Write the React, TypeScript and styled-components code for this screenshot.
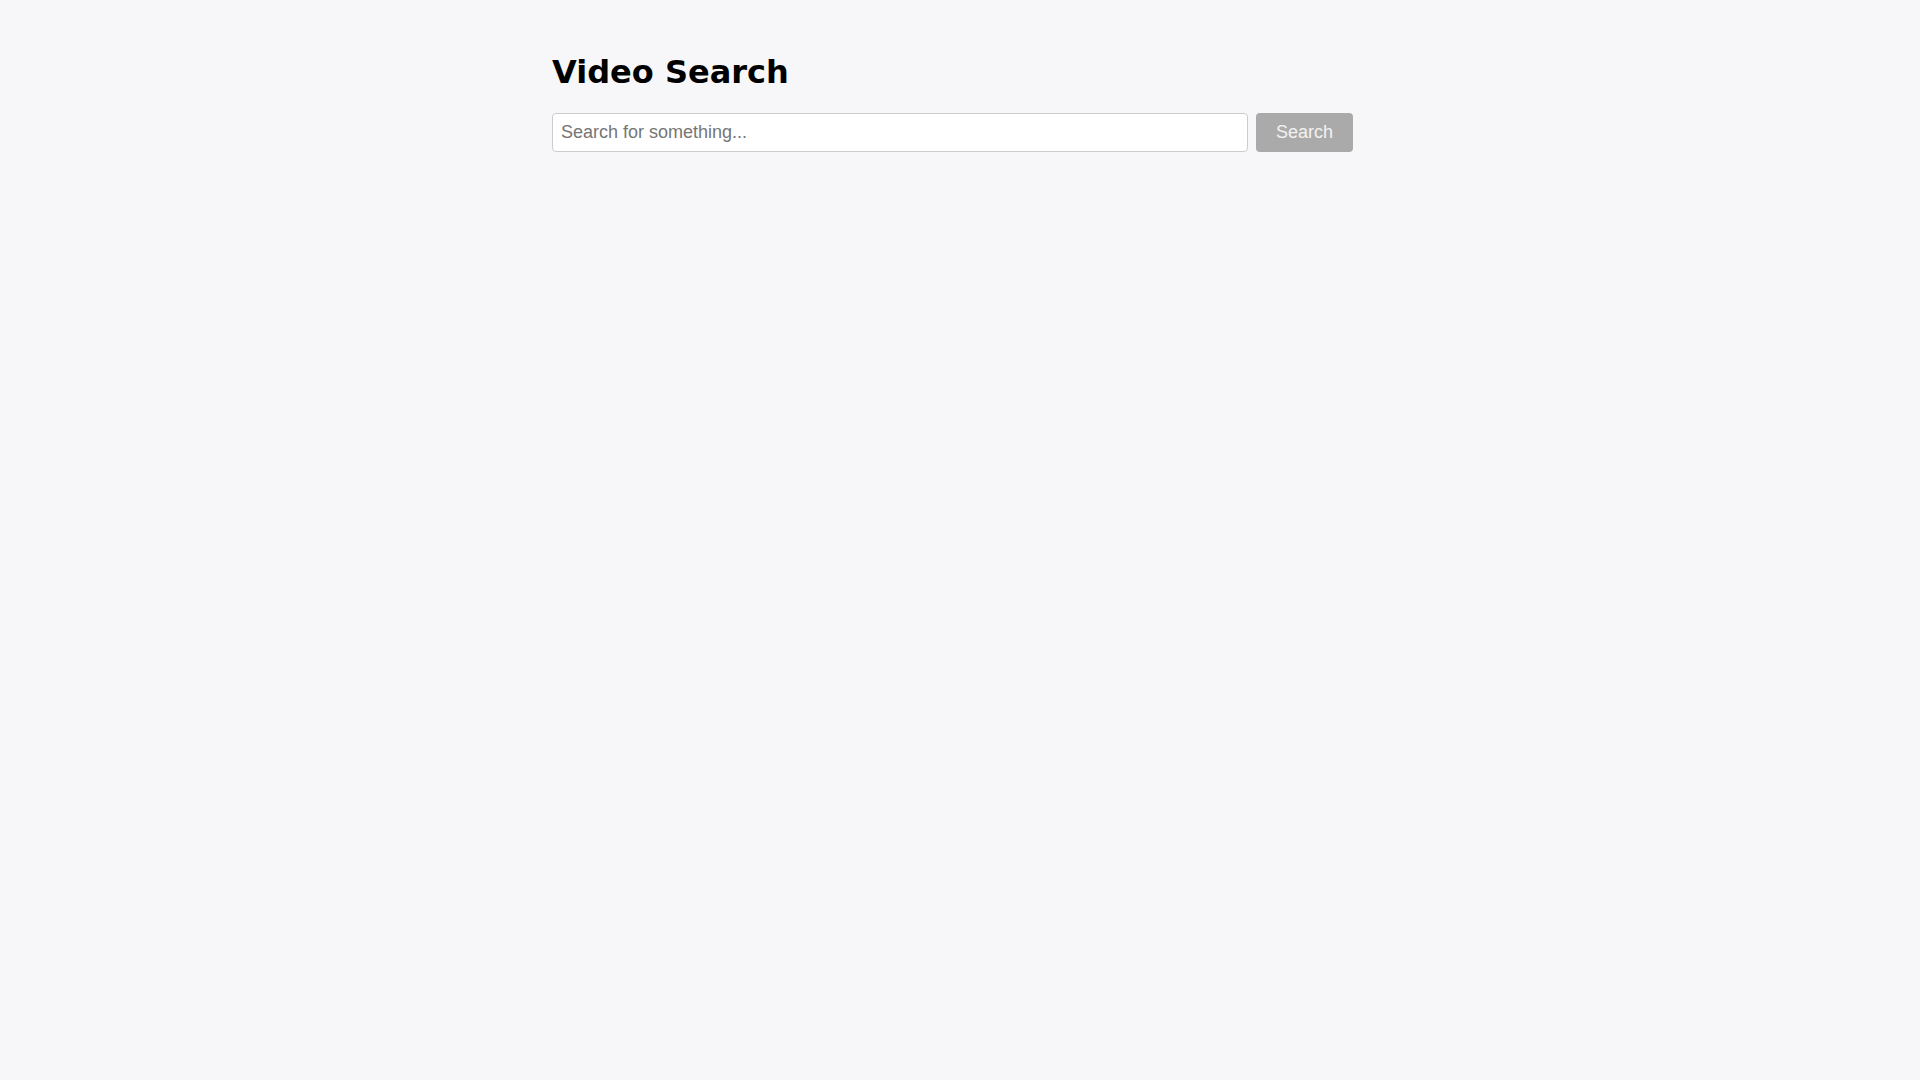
import React, { useState } from "react";
import styled, { createGlobalStyle } from "styled-components";

const GlobalStyle = createGlobalStyle`
  html, body {
    margin: 0;
    padding: 0;
    background: #f7f7f9;
  }
`;

const Page = styled.div`
  min-height: 100vh;
  padding: 32px 31px 32px 16px;
  background: #f7f7f9;
  font-family: "DejaVu Sans", sans-serif;
`;

const Content = styled.main`
  max-width: 801px;
  margin: 0 auto;
`;

const Title = styled.h1`
  font-family: "DejaVu Sans", sans-serif;
  font-size: 32px;
  font-weight: bold;
  margin: 21px 0 22px;
  color: #000;
`;

const SearchForm = styled.form`
  display: flex;
  gap: 8px;
`;

const SearchInput = styled.input`
  flex: 1;
  min-width: 0;
  padding: 8px;
  font-family: "Liberation Sans", Arial, sans-serif;
  font-size: 18px;
  border: 1px solid #ccc;
  border-radius: 4px;
  background: #fff;
  color: #222;
  outline: none;

  &::placeholder {
    color: #757575;
  }
`;

const SearchButton = styled.button`
  padding: 8px 20px;
  font-family: "Liberation Sans", Arial, sans-serif;
  font-size: 18px;
  border: none;
  border-radius: 4px;
  background: #aaaaaa;
  color: #f2f2f2;
  cursor: default;
`;

export default function App() {
  const [query, setQuery] = useState("");

  return (
    <>
      <GlobalStyle />
      <Page>
        <Content>
          <Title>Video Search</Title>
          <SearchForm onSubmit={(e) => e.preventDefault()}>
            <SearchInput
              type="text"
              placeholder="Search for something..."
              value={query}
              onChange={(e) => setQuery(e.target.value)}
            />
            <SearchButton type="submit" disabled={!query}>
              Search
            </SearchButton>
          </SearchForm>
        </Content>
      </Page>
    </>
  );
}
